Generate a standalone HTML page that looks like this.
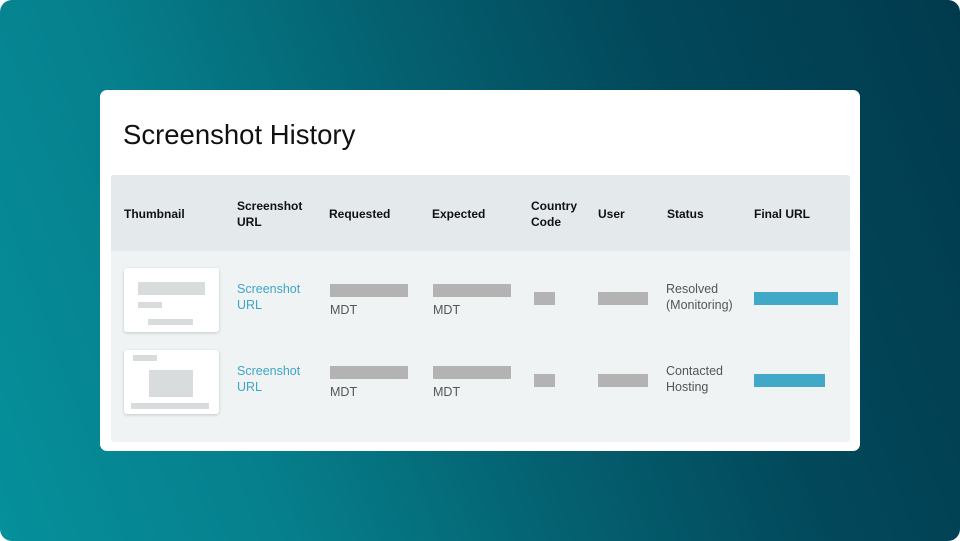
<!DOCTYPE html>
<html><head><style>
html,body{margin:0;padding:0;background:#fff;}
body{width:960px;height:541px;position:relative;overflow:hidden;font-family:"Liberation Sans",sans-serif;}
.bg{position:absolute;left:0;top:0;width:960px;height:541px;border-radius:12px;
background:linear-gradient(70deg, #05909b 0%, #067f8c 25%, #04606f 50%, #02485b 72%, #013a4d 100%);}
.card{position:absolute;left:100px;top:90px;width:760px;height:361px;background:#fff;border-radius:7px;}
h1{position:absolute;left:23px;top:29px;margin:0;font-size:27.5px;font-weight:normal;color:#111;}
.tbl{position:absolute;left:11px;top:85px;width:739px;height:267px;background:#f0f3f4;border-radius:3px;}
.hd{position:absolute;left:0;top:0;width:739px;height:76px;background:#e4e9ec;border-radius:3px 3px 0 0;}
.t{position:absolute;font-size:12px;line-height:16px;}
.h{font-weight:bold;color:#111;}
.b{position:absolute;background:#b3b3b3;height:13px;}
.u{position:absolute;background:#42a8c8;height:13px;}
.l{color:#3ea5c7;font-size:12.5px;}
.g{color:#555;font-size:12.5px;}
.th{position:absolute;left:13px;width:95px;height:64px;background:#fff;border-radius:3px;box-shadow:0 1px 3px rgba(0,0,0,.18);}
.th div{position:absolute;background:#d9dcdd;}
</style></head><body>
<div class="bg"></div>
<div class="card">
<h1>Screenshot History</h1>
<div class="tbl">
<div class="hd"></div>
<div class="t h" style="left:13px;top:31px">Thumbnail</div>
<div class="t h" style="left:126px;top:23px">Screenshot<br>URL</div>
<div class="t h" style="left:218px;top:31px">Requested</div>
<div class="t h" style="left:321px;top:31px">Expected</div>
<div class="t h" style="left:420px;top:23px">Country<br>Code</div>
<div class="t h" style="left:487px;top:31px">User</div>
<div class="t h" style="left:556px;top:31px">Status</div>
<div class="t h" style="left:643px;top:31px">Final URL</div>

<div class="th" style="top:93px"><div style="left:14px;top:14px;width:67px;height:13px"></div><div style="left:14px;top:34px;width:24px;height:6px"></div><div style="left:24px;top:51px;width:45px;height:6px"></div></div>
<div class="th" style="top:175px"><div style="left:9px;top:5px;width:24px;height:6px"></div><div style="left:25px;top:20px;width:44px;height:27px"></div><div style="left:7px;top:53px;width:78px;height:6px"></div></div>

<div class="t l" style="left:126px;top:106px">Screenshot<br>URL</div>
<div class="t l" style="left:126px;top:188px">Screenshot<br>URL</div>

<div class="b" style="left:219px;top:109px;width:78px"></div>
<div class="t g" style="left:219px;top:127px">MDT</div>
<div class="b" style="left:322px;top:109px;width:78px"></div>
<div class="t g" style="left:322px;top:127px">MDT</div>
<div class="b" style="left:423px;top:117px;width:21px"></div>
<div class="b" style="left:487px;top:117px;width:50px"></div>
<div class="t g" style="left:555px;top:106px">Resolved<br>(Monitoring)</div>
<div class="u" style="left:643px;top:117px;width:84px"></div>

<div class="b" style="left:219px;top:191px;width:78px"></div>
<div class="t g" style="left:219px;top:209px">MDT</div>
<div class="b" style="left:322px;top:191px;width:78px"></div>
<div class="t g" style="left:322px;top:209px">MDT</div>
<div class="b" style="left:423px;top:199px;width:21px"></div>
<div class="b" style="left:487px;top:199px;width:50px"></div>
<div class="t g" style="left:555px;top:188px">Contacted<br>Hosting</div>
<div class="u" style="left:643px;top:199px;width:71px"></div>
</div>
</div>
</body></html>
